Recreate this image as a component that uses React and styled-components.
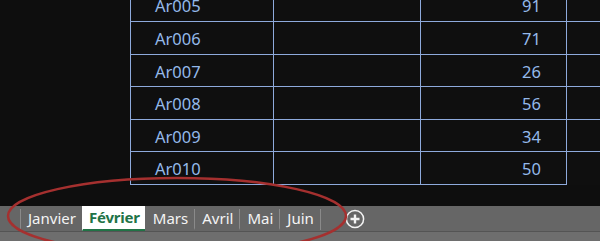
import React from 'react';
import styled, { createGlobalStyle } from 'styled-components';

const GlobalStyle = createGlobalStyle`
  html, body {
    margin: 0;
    padding: 0;
    background: #0e0e0e;
  }
  body {
    font-family: "Noto Sans", "Open Sans", sans-serif;
  }
`;

const Screen = styled.div`
  position: relative;
  width: 600px;
  height: 241px;
  overflow: hidden;
  display: flex;
  flex-direction: column;
`;

const Sheet = styled.div`
  height: 206px;
  flex-shrink: 0;
  display: flex;
  flex-direction: column;
  justify-content: flex-end;
  overflow: hidden;
  padding-bottom: 21px;
  box-sizing: border-box;
`;

const Row = styled.div`
  display: grid;
  grid-template-columns: 130px 143px 147px 146px 1fr;
  grid-template-rows: 100%;
  height: ${p => p.$h}px;
  flex-shrink: 0;
`;

const Blank = styled.div``;

const Cell = styled.div`
  box-sizing: border-box;
  min-height: 0;
  overflow: hidden;
  display: flex;
  align-items: center;
  justify-content: ${p => (p.$right ? 'flex-end' : 'flex-start')};
  padding: ${p => (p.$right ? '2px 25px 0 0' : '2px 0 0 24px')};
  border-left: 1px solid #8eaadc;
  border-bottom: ${p => (p.$noBottom ? 'none' : '1px solid #8eaadc')};
  color: #94b9ea;
  font-size: 16.5px;
  line-height: 20px;
  background: #0f0f0f;
  white-space: nowrap;
`;

const TabBar = styled.div`
  flex: 1;
  background: #666666;
  display: flex;
  flex-direction: column;
`;

const TabStrip = styled.div`
  height: 25px;
  display: flex;
  align-items: stretch;
  padding-left: 20px;
  border-bottom: 1px solid #545454;
`;

const Tab = styled.div`
  display: flex;
  align-items: center;
  padding: ${p => (p.$active ? '0 5px 1px 6px' : '0 6px 1px 7px')};
  font-size: 15px;
  color: ${p => (p.$active ? '#217346' : '#f4f4f4')};
  font-weight: ${p => (p.$active ? 700 : 400)};
  letter-spacing: ${p => (p.$active ? '-0.2px' : '0')};
  background: ${p => (p.$active ? '#ffffff' : 'transparent')};
  border-left: 1px solid ${p => (p.$active || p.$afterActive ? 'transparent' : '#8a8a8a')};
  border-bottom: 2px solid ${p => (p.$active ? '#217346' : 'transparent')};
  margin: ${p => (p.$active ? '0' : '3px 0 1px')};
`;

const TabEnd = styled.div`
  border-left: 1px solid #8a8a8a;
  margin: 3px 0 1px;
  width: 24px;
`;

const AddButton = styled.div`
  display: flex;
  align-items: center;
`;

const BottomStrip = styled.div`
  flex: 1;
  background: #6e6e6e;
`;

const Annotation = styled.svg`
  position: absolute;
  left: 0;
  top: 0;
  pointer-events: none;
`;

const rows = [
  ['Ar005', '91'],
  ['Ar006', '71'],
  ['Ar007', '26'],
  ['Ar008', '56'],
  ['Ar009', '34'],
  ['Ar010', '50'],
];

const heights = [33, 33, 32, 33, 32, 33];
const tabs = ['Janvier', 'Février', 'Mars', 'Avril', 'Mai', 'Juin'];

const App = () => {
  return (
    <Screen>
      <GlobalStyle />
      <Sheet>
        {rows.map(([code, qty], i) => (
          <Row key={code} $h={heights[i]}>
            <Blank />
            <Cell>{code}</Cell>
            <Cell />
            <Cell $right>{qty}</Cell>
            <Cell $noBottom={i === rows.length - 1} />
          </Row>
        ))}
      </Sheet>
      <TabBar>
        <TabStrip>
          {tabs.map((t, i) => (
            <Tab key={t} $active={i === 1} $afterActive={i === 2}>
              {t}
            </Tab>
          ))}
          <TabEnd />
          <AddButton>
            <svg width="20" height="20" viewBox="0 0 20 20">
              <circle cx="10" cy="10" r="8.6" fill="none" stroke="#f4f4f4" strokeWidth="1.5" />
              <path d="M10 5.5v9M5.5 10h9" stroke="#f4f4f4" strokeWidth="2.4" />
            </svg>
          </AddButton>
        </TabStrip>
        <BottomStrip />
      </TabBar>
      <Annotation width="600" height="241" viewBox="0 0 600 241">
        <ellipse cx="177" cy="216" rx="169" ry="38" fill="none" stroke="#a5302f" strokeWidth="2.5" />
      </Annotation>
    </Screen>
  );
};

export default App;
